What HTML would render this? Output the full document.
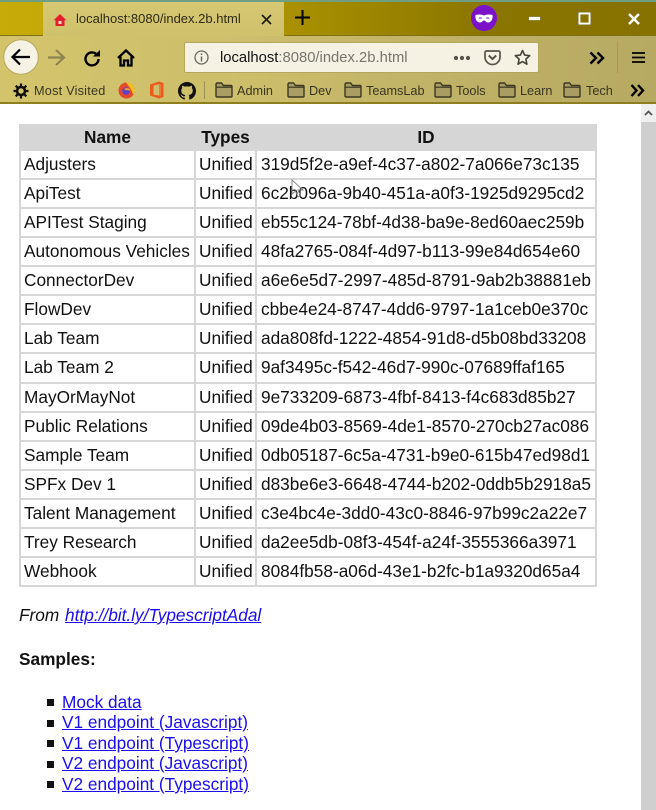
<!DOCTYPE html>
<html><head><meta charset="utf-8"><title>index</title>
<style>
*{box-sizing:border-box}
html,body{margin:0;padding:0;width:656px;height:810px;overflow:hidden;background:#fff;font-family:"Liberation Sans",Arial,sans-serif;color:#111}
.abs,svg.i{position:absolute}
#title{position:absolute;left:0;top:0;width:656px;height:36px;background:linear-gradient(90deg,#c7ab08 0,#c0a406 20%,#a89000 45%,#8a7500 75%,#867200 100%);border-bottom:1px solid #7f7012}
#teal{position:absolute;left:0;top:0;width:656px;height:2px;background:#6f9f82}
#tab{position:absolute;left:43px;top:2px;width:241px;height:35px;background:linear-gradient(#d6c873,#d0c16c)}
#tool{position:absolute;left:0;top:36px;width:656px;height:68px;background:linear-gradient(90deg,#d3c46c 0,#cdbf6b 35%,#bfb166 70%,#b6a962 100%);border-bottom:2px solid #8d7f20}
.tt{position:absolute;white-space:nowrap;font-size:12.7px;color:#3a3520;line-height:16px}
#url{position:absolute;left:184px;top:42px;width:355px;height:31px;background:#f5f2e3;border:1px solid #b3a75e;border-radius:2px}
#sb{position:absolute;left:641px;top:104px;width:15px;height:706px;background:#cfcfcf}
#sbt{position:absolute;left:641px;top:104px;width:15px;height:18px;background:#efefef}
table{position:absolute;left:19px;top:124px;width:578px;border-collapse:separate;border-spacing:2px;background:#d6d6d6;table-layout:fixed;font-size:17.25px}
th{height:23px;padding:0;background:#d6d6d6;color:#111;font-weight:bold;text-align:center;line-height:23px}
td{height:27.07px;padding:0 0 0 4px;background:#fff;white-space:nowrap;line-height:27px;overflow:visible}
td:first-child{padding-left:3px}
td:nth-child(2){padding-left:3px}
a{color:#1a0dee;text-decoration:underline}
.t{position:absolute;white-space:nowrap;font-size:17.25px;line-height:20px}
li.b{position:absolute;left:47px;width:7px;height:7px;background:#111;list-style:none}
</style></head><body>
<div id="title"></div><div id="teal"></div>
<div id="tab"></div>
<div id="tool"></div>

<svg class="i" style="left:53px;top:13px" width="14" height="14" viewBox="0 0 14 14"><path d="M7 1L.6 7.2H2.5V13H11.5V7.2H13.4Z" fill="#e0202c"/><rect x="5.5" y="8" width="3" height="3" fill="#f9dfc0"/></svg>
<div class="tt" style="left:76px;top:11px;font-size:13px;color:#2e2a15">localhost:8080/index.2b.html</div>
<svg class="i" style="left:260px;top:13px" width="13" height="13" viewBox="0 0 13 13"><path d="M2 2L11 11M11 2L2 11" stroke="#1c1a10" stroke-width="1.6" fill="none"/></svg>
<svg class="i" style="left:294px;top:9px" width="17" height="17" viewBox="0 0 17 17"><path d="M8.5 1V16M1 8.5H16" stroke="#000" stroke-width="2" fill="none"/></svg>

<svg class="i" style="left:471px;top:5px" width="26" height="26" viewBox="0 0 26 26"><circle cx="13" cy="13" r="13" fill="#7b12c9"/><path d="M4.500 10C8 9 11 9.500 13 10.500C15 9.500 18 9 21.500 10C22 14 20.500 17.500 17 17.500C15 17.500 14.500 15.500 13 15.500C11.500 15.500 11 17.500 9 17.500C5.500 17.500 4 14 4.500 10Z" fill="#fff"/><ellipse cx="9.300" cy="13" rx="1.700" ry=".8" fill="#9a55d8"/><ellipse cx="16.700" cy="13" rx="1.700" ry=".8" fill="#9a55d8"/></svg>
<svg class="i" style="left:528px;top:16px" width="13" height="5" viewBox="0 0 13 5"><rect x=".5" y=".5" width="12" height="4" fill="#fff" stroke="#6d5f00" stroke-width=".6"/></svg>
<svg class="i" style="left:578px;top:12px" width="13" height="13" viewBox="0 0 13 13"><rect x="1.200" y="1.200" width="10.600" height="10.600" fill="none" stroke="#fff" stroke-width="2.400"/><rect x=".2" y=".2" width="12.600" height="12.600" fill="none" stroke="#5e5200" stroke-width=".4"/></svg>
<svg class="i" style="left:627px;top:12px" width="14" height="14" viewBox="0 0 14 14"><path d="M2 2L12 12M12 2L2 12" stroke="#fff" stroke-width="2.400" fill="none"/></svg>

<svg class="i" style="left:3px;top:39px" width="36" height="36" viewBox="0 0 36 36"><circle cx="18" cy="18" r="17.300" fill="#f6f2e4" stroke="#b7a85f" stroke-width="1"/><path d="M27 18H10M17 10.500L9.500 18L17 25.500" stroke="#000" stroke-width="2.200" fill="none"/></svg>
<svg class="i" style="left:47px;top:49px" width="19" height="17" viewBox="0 0 19 17"><path d="M1 8.500H17M9 1L17 8.500L9 16" stroke="#8d8450" stroke-width="2.200" fill="none"/></svg>
<svg class="i" style="left:83px;top:50px" width="18" height="18" viewBox="0 0 18 18"><path d="M15.500 9A6.500 6.500 0 1 1 13 3.800" stroke="#000" stroke-width="2.400" fill="none"/><path d="M10 6.500H17V0Z" fill="#000"/></svg>
<svg class="i" style="left:117px;top:49px" width="18" height="18" viewBox="0 0 18 18"><path d="M1 9L9 1.500L17 9M3.500 7.500V16.500H7V11.500H11V16.500H14.500V7.500" stroke="#000" stroke-width="2.300" fill="none"/></svg>

<div id="url"></div>
<svg class="i" style="left:194px;top:50px" width="15" height="15" viewBox="0 0 15 15"><circle cx="7.500" cy="7.500" r="6.500" fill="none" stroke="#6a6a62" stroke-width="1.300"/><path d="M7.500 6.500V11.500M7.500 3.500V5" stroke="#6a6a62" stroke-width="1.500"/></svg>
<div class="tt" style="left:220px;top:49px;font-size:14.8px;line-height:18px;color:#111"><span>localhost</span><span style="color:#77756c">:8080/index.2b.html</span></div>
<svg class="i" style="left:453px;top:55px" width="18" height="6" viewBox="0 0 18 6"><circle cx="3" cy="3" r="2.100" fill="#55534a"/><circle cx="9" cy="3" r="2.100" fill="#55534a"/><circle cx="15" cy="3" r="2.100" fill="#55534a"/></svg>
<svg class="i" style="left:484px;top:50px" width="17" height="16" viewBox="0 0 17 16"><path d="M2.500 1H14.500A1.500 1.500 0 0 1 16 2.500V7A7.500 7.500 0 0 1 1 7V2.500A1.500 1.500 0 0 1 2.500 1Z" fill="none" stroke="#55534a" stroke-width="1.700"/><path d="M4.800 5.500L8.500 9L12.200 5.500" fill="none" stroke="#55534a" stroke-width="2"/></svg>
<svg class="i" style="left:514px;top:49px" width="17" height="17" viewBox="0 0 17 17"><path d="M8.500 1.500L10.600 6.100L15.700 6.700L11.900 10.100L12.900 15.200L8.500 12.600L4.100 15.200L5.100 10.100L1.300 6.700L6.400 6.100Z" fill="none" stroke="#46443a" stroke-width="1.600" stroke-linejoin="round"/></svg>
<svg class="i" style="left:589px;top:51px" width="16" height="14" viewBox="0 0 16 14"><path d="M1.500 1.500L7 7L1.500 12.500M8.500 1.500L14 7L8.500 12.500" stroke="#000" stroke-width="2.400" fill="none"/></svg>
<div class="abs" style="left:617px;top:41px;width:1px;height:32px;background:#a89b55"></div>
<svg class="i" style="left:632px;top:51px" width="13" height="13" viewBox="0 0 13 13"><path d="M0 2H13M0 6.500H13M0 11H13" stroke="#000" stroke-width="1.800"/></svg>

<svg class="i" style="left:13px;top:83px" width="16" height="16" viewBox="0 0 16 16"><circle cx="8" cy="8" r="4" fill="none" stroke="#111" stroke-width="2.600"/><path d="M8 .5V3.500M8 12.500V15.500M.5 8H3.500M12.500 8H15.500M2.700 2.700L4.800 4.800M11.200 11.200L13.300 13.300M13.300 2.700L11.200 4.800M4.800 11.200L2.700 13.300" stroke="#111" stroke-width="2.200"/></svg>
<div class="tt" style="left:34px;top:83px;letter-spacing:.22px">Most Visited</div>
<svg class="i" style="left:118px;top:82px" width="17" height="17" viewBox="0 0 17 17"><circle cx="8.500" cy="8.500" r="8" fill="#e5482d"/><path d="M8 0.500C13 .5 16.500 4 16.500 8.500C16.500 10 16 11.500 15 12.500C14 8 11 4 8 .5Z" fill="#f4c41e"/><circle cx="8" cy="9" r="3.800" fill="#5a43c9"/><path d="M6 7C8 5.500 12 6 12.500 8.500C10.500 8 8 9 6 7Z" fill="#f59a23"/></svg>
<svg class="i" style="left:149px;top:81px" width="15" height="18" viewBox="0 0 15 18"><path d="M1 3.500L10 .5L14.500 2V16L10 17.500L1 14.500Z" fill="#eb5b1c"/><path d="M4.500 4.500L10 3.300V14.500L4.500 13.500Z" fill="#cdbf6b"/><path d="M10 3L12 3.500V14.500L10 15Z" fill="#f07a3c"/></svg>
<svg class="i" style="left:178px;top:82px" width="18" height="18" viewBox="0 0 16 16"><path fill="#111" d="M8 0C3.580 0 0 3.580 0 8c0 3.540 2.290 6.530 5.470 7.590.4.070.55-.17.55-.38 0-.19-.01-.82-.01-1.490-2.010.37-2.530-.49-2.690-.94-.09-.23-.48-.94-.82-1.130-.28-.15-.68-.52-.01-.53.630-.01 1.080.58 1.230.82.720 1.210 1.870.87 2.330.66.070-.52.280-.87.510-1.070-1.780-.2-3.640-.89-3.640-3.950 0-.87.310-1.590.82-2.150-.08-.2-.36-1.020.08-2.120 0 0 .67-.21 2.200.82.640-.18 1.320-.27 2-.27s1.360.09 2 .27c1.530-1.040 2.200-.82 2.200-.82.440 1.100.16 1.920.08 2.120.51.56.82 1.270.82 2.150 0 3.070-1.870 3.750-3.650 3.950.29.250.54.730.54 1.480 0 1.070-.01 1.930-.01 2.200 0 .21.150.460.550.380A8.010 8.010 0 0 0 16 8c0-4.420-3.580-8-8-8z"/></svg>
<div class="abs" style="left:204px;top:81px;width:1px;height:18px;background:#9c9054"></div>

<svg class="i" style="left:215px;top:82px" width="18" height="16" viewBox="0 0 18 16"><defs><g id="f"><path d="M1 14V2.500C1 1.700 1.500 1 2.300 1H6.500L8.500 3.500H16C16.600 3.500 17 4 17 4.600V14C17 14.600 16.600 15 16 15H2C1.500 15 1 14.600 1 14Z" fill="#a99d63" stroke="#3d3822" stroke-width="1.400"/><path d="M1 5.200H17" stroke="#3d3822" stroke-width="1.200"/></g></defs><use href="#f"/></svg>
<div class="tt" style="left:237px;top:83px">Admin</div>
<svg class="i" style="left:287px;top:82px" width="18" height="16" viewBox="0 0 18 16"><use href="#f"/></svg>
<div class="tt" style="left:309px;top:83px">Dev</div>
<svg class="i" style="left:344px;top:82px" width="18" height="16" viewBox="0 0 18 16"><use href="#f"/></svg>
<div class="tt" style="left:366px;top:83px">TeamsLab</div>
<svg class="i" style="left:434px;top:82px" width="18" height="16" viewBox="0 0 18 16"><use href="#f"/></svg>
<div class="tt" style="left:456px;top:83px">Tools</div>
<svg class="i" style="left:498px;top:82px" width="18" height="16" viewBox="0 0 18 16"><use href="#f"/></svg>
<div class="tt" style="left:520px;top:83px">Learn</div>
<svg class="i" style="left:563px;top:82px" width="18" height="16" viewBox="0 0 18 16"><use href="#f"/></svg>
<div class="tt" style="left:586px;top:83px">Tech</div>
<svg class="i" style="left:630px;top:84px" width="15" height="13" viewBox="0 0 15 13"><path d="M1.500 1L6.500 6.500L1.500 12M8 1L13 6.500L8 12" stroke="#000" stroke-width="2.400" fill="none"/></svg>

<div id="sb"></div><div id="sbt"></div>
<svg class="i" style="left:644px;top:110px" width="9" height="6" viewBox="0 0 9 6"><path d="M1 5L4.500 1.500L8 5" stroke="#555" stroke-width="1.800" fill="none"/></svg>

<table>
<colgroup><col style="width:173px"><col style="width:59px"><col></colgroup>
<tr><th>Name</th><th>Types</th><th>ID</th></tr>
<tr><td>Adjusters</td><td>Unified</td><td>319d5f2e-a9ef-4c37-a802-7a066e73c135</td></tr>
<tr><td>ApiTest</td><td>Unified</td><td>6c2b096a-9b40-451a-a0f3-1925d9295cd2</td></tr>
<tr><td>APITest Staging</td><td>Unified</td><td>eb55c124-78bf-4d38-ba9e-8ed60aec259b</td></tr>
<tr><td>Autonomous Vehicles</td><td>Unified</td><td>48fa2765-084f-4d97-b113-99e84d654e60</td></tr>
<tr><td>ConnectorDev</td><td>Unified</td><td>a6e6e5d7-2997-485d-8791-9ab2b38881eb</td></tr>
<tr><td>FlowDev</td><td>Unified</td><td>cbbe4e24-8747-4dd6-9797-1a1ceb0e370c</td></tr>
<tr><td>Lab Team</td><td>Unified</td><td>ada808fd-1222-4854-91d8-d5b08bd33208</td></tr>
<tr><td>Lab Team 2</td><td>Unified</td><td>9af3495c-f542-46d7-990c-07689ffaf165</td></tr>
<tr><td>MayOrMayNot</td><td>Unified</td><td>9e733209-6873-4fbf-8413-f4c683d85b27</td></tr>
<tr><td>Public Relations</td><td>Unified</td><td>09de4b03-8569-4de1-8570-270cb27ac086</td></tr>
<tr><td>Sample Team</td><td>Unified</td><td>0db05187-6c5a-4731-b9e0-615b47ed98d1</td></tr>
<tr><td>SPFx Dev 1</td><td>Unified</td><td>d83be6e3-6648-4744-b202-0ddb5b2918a5</td></tr>
<tr><td>Talent Management</td><td>Unified</td><td>c3e4bc4e-3dd0-43c0-8846-97b99c2a22e7</td></tr>
<tr><td>Trey Research</td><td>Unified</td><td>da2ee5db-08f3-454f-a24f-3555366a3971</td></tr>
<tr><td>Webhook</td><td>Unified</td><td>8084fb58-a06d-43e1-b2fc-b1a9320d65a4</td></tr>
</table>
<svg class="i" style="left:291px;top:179px" width="14" height="20" viewBox="0 0 14 20"><path d="M1 1V15L4.500 12L7 18L9.500 17L7 11H12Z" fill="none" stroke="#8a8a8a" stroke-width="1"/></svg>

<div class="t" style="left:19px;top:605px;font-style:italic">From <a href="#" style="margin-left:1px">http://bit.ly/TypescriptAdal</a></div>
<div class="t" style="left:19px;top:649px;font-weight:bold">Samples:</div>
<ul style="margin:0;padding:0">
<li class="b" style="top:699px"></li>
<li class="b" style="top:720px"></li>
<li class="b" style="top:740px"></li>
<li class="b" style="top:761px"></li>
<li class="b" style="top:781px"></li>
</ul>
<div class="t" style="left:62px;top:692px"><a href="#">Mock data</a></div>
<div class="t" style="left:62px;top:712px"><a href="#">V1 endpoint (Javascript)</a></div>
<div class="t" style="left:62px;top:733px"><a href="#">V1 endpoint (Typescript)</a></div>
<div class="t" style="left:62px;top:753px"><a href="#">V2 endpoint (Javascript)</a></div>
<div class="t" style="left:62px;top:774px"><a href="#">V2 endpoint (Typescript)</a></div>
</body></html>
